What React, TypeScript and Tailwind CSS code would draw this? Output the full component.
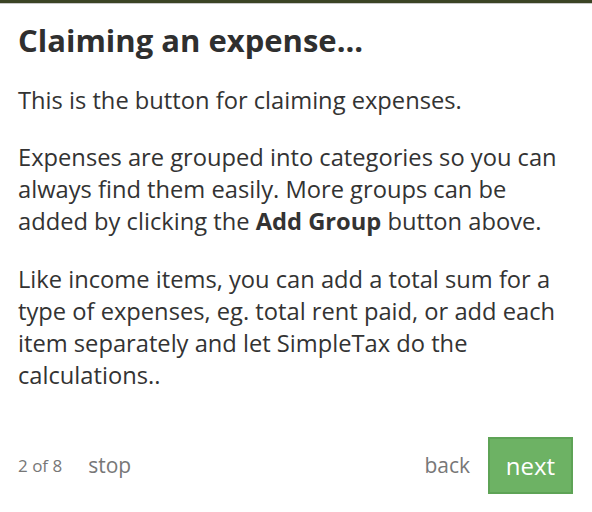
export default function App() {
  return (
    <div className="w-[592px] h-[512px] bg-white overflow-hidden font-['Open_Sans',sans-serif] text-[#333]">
      <div className="h-[3px] bg-[#3b4424]" />
      <div className="h-px bg-[#c9c9c9]" />
      <div className="px-[18px] pt-[16px]">
        <h1 className="text-[31px] font-bold leading-[40px] text-[#2f2f2f]">Claiming an expense...</h1>
        <div className="mt-[24px] text-[23.7px] leading-[32px]">
          <p>This is the button for claiming expenses.</p>
          <p className="mt-[25px]">
            Expenses are grouped into categories so you can
            <br />
            always find them easily. More groups can be
            <br />
            added by clicking the <b>Add Group</b> button above.
          </p>
          <p className="mt-[26px]">
            Like income items, you can add a total sum for a
            <br />
            type of expenses, eg. total rent paid, or add each
            <br />
            item separately and let SimpleTax do the
            <br />
            calculations..
          </p>
        </div>
      </div>
      <div className="mt-[46px] flex items-center justify-between pl-[18px] pr-[19px]">
        <div className="flex items-center gap-[26px] text-[#777]">
          <span className="text-[17px]">2 of 8</span>
          <span className="text-[21px]">stop</span>
        </div>
        <div className="flex items-center gap-[18px]">
          <span className="text-[21px] text-[#777]">back</span>
          <button className="w-[85px] h-[57px] bg-[#6db264] border-2 border-[#5ea356] text-white text-[24px]">next</button>
        </div>
      </div>
    </div>
  );
}
